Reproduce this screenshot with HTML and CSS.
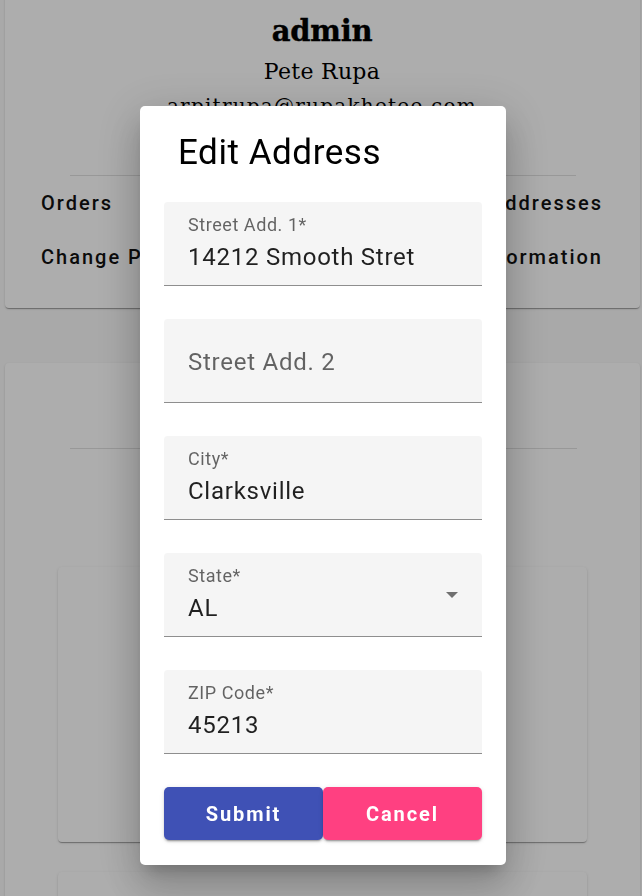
FILE: index.html
```html
<!DOCTYPE html>
<html lang="en">
<head>
<meta charset="utf-8">
<title>Edit Address</title>
<link rel="stylesheet" href="styles.css">
</head>
<body>
<div class="page">
  <section class="card profile">
    <h1 class="username">admin</h1>
    <p class="fullname">Pete Rupa</p>
    <p class="email">arpitrupa@rupakhetee.com</p>
    <hr class="divider">
    <nav class="links">
      <a class="link">Orders</a>
      <a class="link link-right">Addresses</a>
      <a class="link">Change Password</a>
      <a class="link link-right">Information</a>
    </nav>
  </section>

  <section class="card orders">
    <h2 class="section-title">Orders</h2>
    <hr class="divider">
    <div class="order-card first"></div>
    <div class="order-card"></div>
  </section>
</div>

<div class="overlay">
  <div class="dialog" role="dialog">
    <h2 class="dialog-title">Edit Address</h2>
    <form class="form">
      <div class="field">
        <div class="field-main">
          <div class="field-label">Street Add. 1*</div>
          <div class="field-value">14212 Smooth Stret</div>
        </div>
      </div>
      <div class="field">
        <div class="field-main">
          <div class="field-placeholder">Street Add. 2</div>
        </div>
      </div>
      <div class="field">
        <div class="field-main">
          <div class="field-label">City*</div>
          <div class="field-value">Clarksville</div>
        </div>
      </div>
      <div class="field select">
        <div class="field-main">
          <div class="field-label">State*</div>
          <div class="field-value">AL</div>
        </div>
        <span class="select-arrow"></span>
      </div>
      <div class="field">
        <div class="field-main">
          <div class="field-label">ZIP Code*</div>
          <div class="field-value">45213</div>
        </div>
      </div>
      <div class="actions">
        <button type="button" class="btn btn-primary">Submit</button>
        <button type="button" class="btn btn-accent">Cancel</button>
      </div>
    </form>
  </div>
</div>
</body>
</html>
```

FILE: styles.css
```css
html, body {
  margin: 0;
  padding: 0;
}

body {
  background: #fafafa;
  font-family: Roboto, "Liberation Sans", sans-serif;
  overflow: hidden;
  height: 896px;
}

.page {
  padding: 0 2px 0 5px;
}

.card {
  background: #fff;
  border-radius: 4px;
  box-shadow: 0 2px 1px -1px rgba(0,0,0,.2), 0 1px 1px 0 rgba(0,0,0,.14), 0 1px 3px 0 rgba(0,0,0,.12);
}

.profile {
  margin-top: -8px;
  padding: 21px 37px 39px 36px;
  text-align: center;
}

.username {
  margin: 0;
  font-family: "DejaVu Serif", serif;
  font-weight: 900;
  font-size: 29px;
  line-height: 36px;
  color: #000;
  letter-spacing: -0.3px;
  -webkit-text-stroke: 0.4px #000;
}

.fullname {
  margin: 9px 0 0;
  font-family: "DejaVu Serif", serif;
  font-size: 22px;
  line-height: 28px;
  letter-spacing: 0.3px;
  color: #000;
}

.email {
  margin: 7px 0 0;
  font-family: "DejaVu Serif", serif;
  font-size: 20px;
  line-height: 26px;
  letter-spacing: 1.25px;
  color: #000;
}

.divider {
  border: 0;
  border-top: 1px solid rgba(0,0,0,.12);
  margin: 0 27px 0 29px;
  height: 0;
}

.profile .divider {
  margin-top: 56px;
}

.links {
  display: grid;
  grid-template-columns: 1fr 1fr;
  row-gap: 30px;
  margin-top: 15px;
}

.link {
  font-family: Roboto, sans-serif;
  font-weight: 500;
  font-size: 20px;
  line-height: 24px;
  letter-spacing: 2px;
  color: #111;
  text-align: left;
}

.link-right {
  text-align: right;
}

.orders {
  margin-top: 55px;
  padding: 30px 0 30px;
  height: 700px;
}

.section-title {
  margin: 0 0 15px;
  font-family: Roboto, sans-serif;
  font-weight: 400;
  font-size: 24px;
  line-height: 40px;
  text-align: center;
  color: #000;
}

.orders .divider {
  margin: 0 63px 0 65px;
}

.order-card {
  margin: 30px 53px 0;
  height: 275px;
  background: #fff;
  border-radius: 4px;
  box-shadow: 0 2px 1px -1px rgba(0,0,0,.2), 0 1px 1px 0 rgba(0,0,0,.14), 0 1px 3px 0 rgba(0,0,0,.12);
}

.order-card.first {
  margin-top: 118px;
}

/* overlay + dialog */
.overlay {
  position: fixed;
  inset: 0;
  background: rgba(0,0,0,.32);
  display: flex;
  justify-content: center;
  align-items: flex-start;
  padding: 106px 0 0 4px;
  box-sizing: border-box;
}

.dialog {
  width: 366px;
  box-sizing: border-box;
  background: #fff;
  border-radius: 5px;
  padding: 23px 24px 25px;
  box-shadow: 0 11px 15px -7px rgba(0,0,0,.2), 0 24px 38px 3px rgba(0,0,0,.14), 0 9px 46px 8px rgba(0,0,0,.12);
}

.dialog-title {
  margin: 0 0 25px;
  padding-left: 14px;
  font-family: Roboto, sans-serif;
  font-weight: 400;
  font-size: 35px;
  line-height: 48px;
  letter-spacing: 0.55px;
  color: #000;
}

.form {
  margin: 0;
}

.field {
  height: 84px;
  box-sizing: border-box;
  margin-bottom: 33px;
  background: #f5f5f5;
  border-radius: 4px 4px 0 0;
  border-bottom: 1px solid rgba(0,0,0,.42);
  padding: 0 24px;
  display: flex;
  align-items: center;
}

.field-main {
  flex: 1;
  align-self: stretch;
  padding-top: 12px;
  box-sizing: border-box;
}

.field-label {
  font-size: 18px;
  line-height: 21px;
  letter-spacing: 0.56px;
  color: rgba(0,0,0,.6);
}

.field-value {
  margin-top: 8px;
  font-size: 24px;
  line-height: 28px;
  letter-spacing: 0.75px;
  color: rgba(0,0,0,.87);
}

.field-placeholder {
  padding-top: 17px;
  font-size: 24px;
  line-height: 28px;
  letter-spacing: 0.75px;
  color: rgba(0,0,0,.6);
}

.select-arrow {
  width: 0;
  height: 0;
  border-left: 6px solid transparent;
  border-right: 6px solid transparent;
  border-top: 6px solid rgba(0,0,0,.54);
}

.actions {
  display: flex;
}

.btn {
  flex: 1;
  height: 53px;
  border: 0;
  border-radius: 5px;
  font-family: Roboto, sans-serif;
  font-weight: 700;
  font-size: 20px;
  letter-spacing: 1.9px;
  color: #fff;
  box-shadow: 0 3px 1px -2px rgba(0,0,0,.2), 0 2px 2px 0 rgba(0,0,0,.14), 0 1px 5px 0 rgba(0,0,0,.12);
  padding: 0;
  cursor: pointer;
}

.btn-primary {
  background: #3f51b5;
}

.btn-accent {
  background: #ff4081;
}
```
